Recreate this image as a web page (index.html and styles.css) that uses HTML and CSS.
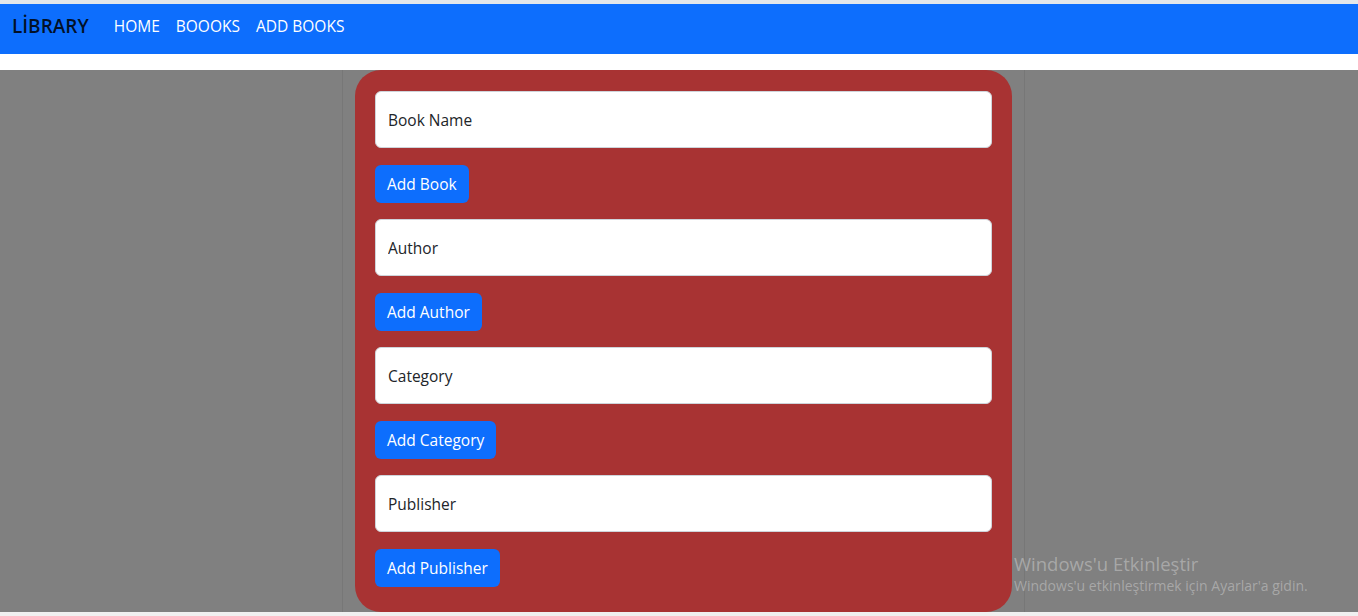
FILE: index.html
```html
<!DOCTYPE html>
<html lang="tr">
<head>
<meta charset="utf-8">
<title>Library</title>
<link rel="stylesheet" href="styles.css">
</head>
<body>
<div class="topstrip"></div>
<nav class="navbar">
  <a class="brand" href="#">LİBRARY</a>
  <a class="nav-link" href="#">HOME</a>
  <a class="nav-link" href="#">BOOOKS</a>
  <a class="nav-link" href="#">ADD BOOKS</a>
</nav>
<div class="spacer"></div>
<main class="stage">
  <div class="column">
    <form class="card">
      <input class="field" type="text" placeholder="Book Name">
      <button class="btn" type="button">Add Book</button>
      <input class="field" type="text" placeholder="Author">
      <button class="btn" type="button">Add Author</button>
      <input class="field" type="text" placeholder="Category">
      <button class="btn" type="button">Add Category</button>
      <input class="field" type="text" placeholder="Publisher">
      <button class="btn" type="button">Add Publisher</button>
    </form>
  </div>
  <div class="activate">
    <div class="act-title">Windows'u Etkinleştir</div>
    <div class="act-sub">Windows'u etkinleştirmek için Ayarlar'a gidin.</div>
  </div>
</main>
<div class="bottomstrip"></div>
</body>
</html>
```
FILE: styles.css
```css
* { box-sizing: border-box; }
html, body { margin: 0; padding: 0; }
body {
  font-family: "Open Sans", "Noto Sans", "Liberation Sans", sans-serif;
  background: #ffffff;
  width: 1358px;
  height: 616px;
  overflow: hidden;
}
.topstrip { height: 4px; background: #e3e7ea; }
.navbar {
  height: 50px;
  background: #0d6efd;
  display: flex;
  align-items: center;
  padding: 0 12px 6px 12px;
}
.brand {
  font-size: 19px;
  font-weight: 600;
  color: rgba(0,0,0,0.85);
  text-decoration: none;
  margin-right: 25px;
}
.nav-link {
  font-size: 15.5px;
  color: #ffffff;
  text-decoration: none;
  margin-right: 16px;
}
.spacer { height: 16px; background: #fff; }
.stage {
  position: relative;
  height: 542px;
  background: #808080;
  display: flex;
  justify-content: flex-start;
  padding-left: 342px;
}
.column {
  width: 683px;
  border-left: 1px solid #777;
  border-right: 1px solid #777;
  padding: 0 12px 0 12px;
}
.card {
  background: #a83333;
  border-radius: 26px;
  height: 542px;
  padding: 21px 20px 0 20px;
  display: flex;
  flex-direction: column;
  align-items: flex-start;
}
.field {
  width: 617px;
  height: 57px;
  border: 1px solid #ced4da;
  border-radius: 6px;
  background: #fff;
  padding: 0 12px;
  font-family: inherit;
  font-size: 15.5px;
  color: #212529;
  margin-bottom: 17px;
}
.field::placeholder { color: #212529; opacity: 1; }
.btn {
  height: 38px;
  border: none;
  border-radius: 6px;
  background: #0d6efd;
  color: #fff;
  font-family: inherit;
  font-size: 15.5px;
  padding: 0 12px;
  margin-bottom: 16px;
}
.activate {
  position: absolute;
  left: 1014px;
  top: 482px;
  color: rgba(255,255,255,0.33);
}
.act-title { font-size: 18.5px; line-height: 24px; }
.act-sub { font-size: 14px; line-height: 20px; }
.bottomstrip { height: 4px; background: #f0f0f0; }
```
